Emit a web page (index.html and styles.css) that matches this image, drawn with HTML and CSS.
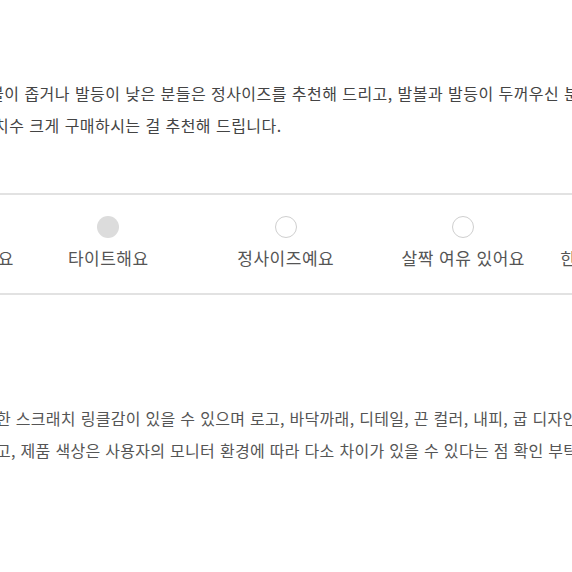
FILE: index.html
```html
<!DOCTYPE html>
<html lang="ko">
<head>
<meta charset="utf-8">
<link rel="stylesheet" href="styles.css">
</head>
<body>
<div class="page">
  <div class="desc">
    <div class="line">발볼이 좁거나 발등이 낮은 분들은 정사이즈를 추천해 드리고, 발볼과 발등이 두꺼우신 분들은</div>
    <div class="line">반 치수 크게 구매하시는 걸 추천해 드립니다.</div>
  </div>
  <div class="fit">
    <div class="opt"><span class="radio"></span><span class="label">한 치수 정도 더 작아요</span></div>
    <div class="opt"><span class="radio on"></span><span class="label">타이트해요</span></div>
    <div class="opt"><span class="radio"></span><span class="label">정사이즈예요</span></div>
    <div class="opt"><span class="radio"></span><span class="label">살짝 여유 있어요</span></div>
    <div class="opt"><span class="radio"></span><span class="label">한 치수 이상 넉넉해요</span></div>
  </div>
  <div class="notes">
    <div class="line">한 스크래치 링클감이 있을 수 있으며 로고, 바닥까래, 디테일, 끈 컬러, 내피, 굽 디자인은</div>
    <div class="line">고, 제품 색상은 사용자의 모니터 환경에 따라 다소 차이가 있을 수 있다는 점 확인 부탁드립니다.</div>
  </div>
</div>
</body>
</html>
```
FILE: styles.css
```css
html, body {
  margin: 0;
  padding: 0;
  background: #fff;
  overflow: hidden;
}
body {
  font-family: "Noto Sans CJK KR", "Noto Sans", sans-serif;
  font-size: 16px;
  color: #555;
}
.page {
  padding-top: 77px;
  width: 572px;
  overflow: hidden;
}
.line {
  white-space: nowrap;
  line-height: 32px;
  height: 32px;
  letter-spacing: 0.45px;
}
.desc {
  margin-left: -26px;
  color: #444;
}
.fit {
  margin-top: 52px;
  border-top: 2px solid #e2e2e2;
  border-bottom: 2px solid #e2e2e2;
  padding: 21px 0 23px;
  display: flex;
  margin-left: -158px;
  width: 900px;
}
.opt {
  flex: 0 0 177.5px;
  display: flex;
  flex-direction: column;
  align-items: center;
  gap: 8px;
}
.radio {
  width: 22px;
  height: 22px;
  box-sizing: border-box;
  border-radius: 50%;
  border: 1.5px solid #cfcfcf;
  background: #fff;
}
.radio.on {
  border: none;
  background: #dcdcdc;
}
.label {
  white-space: nowrap;
  line-height: 24px;
  font-size: 17px;
  letter-spacing: 0.5px;
  color: #555;
}
.notes {
  margin-top: 107px;
  margin-left: -4px;
  color: #555;
}
.notes .line {
  letter-spacing: 0.3px;
}
```
